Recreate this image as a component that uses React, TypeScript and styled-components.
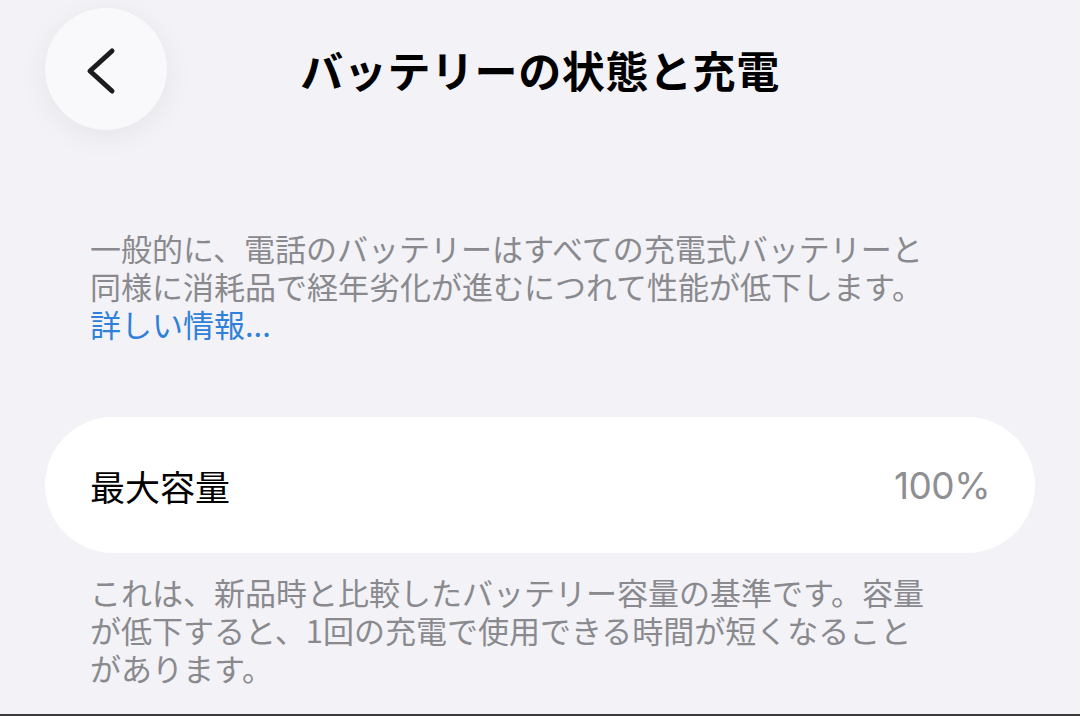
import styled, { createGlobalStyle } from 'styled-components'

const GlobalStyle = createGlobalStyle`
  html, body {
    margin: 0;
    padding: 0;
    background: #f2f2f7;
  }
  body {
    font-family: "Noto Sans CJK JP", "Noto Sans", sans-serif;
    -webkit-font-smoothing: antialiased;
  }
`

const Screen = styled.div`
  height: 716px;
  box-sizing: border-box;
  padding: 0 45px;
  background: #f2f2f7;
  box-shadow: inset 0 -2px 0 #3a3a3c;
  overflow: hidden;
`

const Header = styled.header`
  display: grid;
  grid-template-columns: 122px 1fr 122px;
  align-items: center;
  padding-top: 8px;
`

const BackButton = styled.button`
  width: 122px;
  height: 122px;
  border: none;
  border-radius: 50%;
  padding: 0;
  background: #f9f9fb;
  box-shadow: 0 6px 30px rgba(0, 0, 0, 0.06);
  display: flex;
  align-items: center;
  justify-content: center;
  cursor: pointer;
`

const Title = styled.h1`
  margin: 0;
  text-align: center;
  font-size: 43px;
  font-weight: 700;
  color: #000;
  letter-spacing: 0.6px;
`

const Note = styled.p<{ $gap: number }>`
  margin: ${p => p.$gap}px 0 0 45px;
  max-width: 845px;
  font-size: 31px;
  line-height: 38px;
  color: #8a8a8e;
`

const Link = styled.a`
  display: block;
  color: #2f80d9;
  text-decoration: none;
`

const Card = styled.div`
  margin-top: 74px;
  height: 136px;
  border-radius: 68px;
  background: #fff;
  display: flex;
  align-items: center;
  justify-content: space-between;
  padding: 0 45px;
`

const Label = styled.span`
  font-size: 35px;
  font-weight: 400;
  color: #000;
`

const Value = styled.span`
  font-family: "Inter", "Noto Sans", sans-serif;
  font-size: 37px;
  letter-spacing: -0.5px;
  color: #8e8e93;
`

function Chevron() {
  return (
    <svg width="122" height="122" viewBox="0 0 122 122">
      <path
        d="M67 43 L45 63 L67 83"
        fill="none"
        stroke="#1c1c1e"
        strokeWidth="5"
        strokeLinecap="round"
        strokeLinejoin="round"
      />
    </svg>
  )
}

export default function App() {
  return (
    <>
      <GlobalStyle />
      <Screen>
        <Header>
          <BackButton aria-label="戻る">
            <Chevron />
          </BackButton>
          <Title>バッテリーの状態と充電</Title>
          <span />
        </Header>

        <Note $gap={99}>
          一般的に、電話のバッテリーはすべての充電式バッテリーと同様に消耗品で経年劣化が進むにつれて性能が低下します。
          <Link href="#">詳しい情報...</Link>
        </Note>

        <Card>
          <Label>最大容量</Label>
          <Value>100%</Value>
        </Card>

        <Note $gap={20}>
          これは、新品時と比較したバッテリー容量の基準です。容量が低下すると、1回の充電で使用できる時間が短くなることがあります。
        </Note>
      </Screen>
    </>
  )
}
